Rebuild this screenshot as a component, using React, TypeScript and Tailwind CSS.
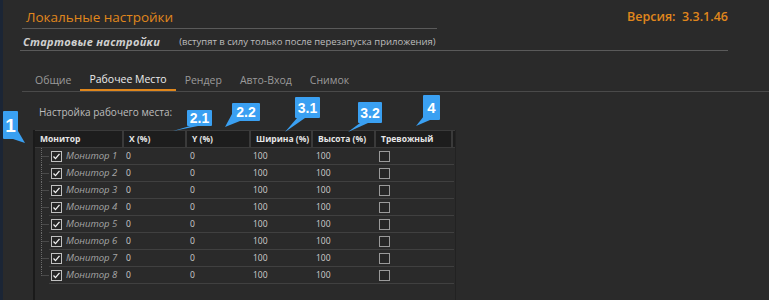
import React from "react";

const tabs = ["Общие", "Рабочее Место", "Рендер", "Авто-Вход", "Снимок"];
const monitors = [1, 2, 3, 4, 5, 6, 7, 8];

// callout shapes: box + tail, label sits on top
const callouts = [
  { label: "1", box: [3, 111, 15, 28], tail: "13,139 18,131 25,143", text: "text-[19px]" },
  { label: "2.1", box: [187, 110, 25, 16], tail: "190,126 198,126 173,131", text: "text-[14px]" },
  { label: "2.2", box: [232, 103, 28, 18], tail: "232,114 240,121 225,127", text: "text-[14px]" },
  { label: "3.1", box: [295, 97, 25, 21], tail: "297,118 305,118 285,132", text: "text-[14px]" },
  { label: "3.2", box: [358, 102, 24, 21], tail: "360,123 368,123 348,132", text: "text-[14px]" },
  { label: "4", box: [423, 95, 17, 25], tail: "424,116 430,120 416,126", text: "text-[15px]" },
];

const Check = ({ checked }: { checked: boolean }) => (
  <svg width="11" height="11" viewBox="0 0 11 11" className="shrink-0">
    <rect x="0.5" y="0.5" width="10" height="10" fill="#262626" stroke={checked ? "#c0c0c0" : "#9a9a9a"} />
    {checked && <path d="M2.5 5.5 L4.5 7.6 L8.5 2.8" fill="none" stroke="#f2f2f2" strokeWidth="1.3" />}
  </svg>
);

const Tree = ({ last }: { last: boolean }) => (
  <svg width="14" height="17" viewBox="0 0 14 17" className="shrink-0">
    <line x1="6.5" y1="0" x2="6.5" y2={last ? 8.5 : 17} stroke="#6a6a6a" strokeDasharray="1 1" />
    <line x1="6.5" y1="8.5" x2="14" y2="8.5" stroke="#6a6a6a" strokeDasharray="1 1" />
  </svg>
);

const head = "pl-[5px] flex items-center whitespace-nowrap border-r-2 border-[#3a3a3a]";

export default function App() {
  return (
    <div className="relative w-[769px] h-[300px] overflow-hidden bg-[#2a2a2a] border-l-[3px] border-[#1b2535] font-['Open_Sans',sans-serif]">
      {/* header */}
      <div className="flex items-start justify-between pr-[41px]">
        <div className="ml-[19px] w-[415px] h-[29px] border-b border-[#5a5a5a] pl-[4px] pt-[8px] text-[13.5px] leading-[18px] text-[#e0871c]">
          Локальные настройки
        </div>
        <div className="pt-[9px] text-[12.5px] leading-[16px] font-semibold text-[#e0871c] whitespace-pre">
          Версия:  3.3.1.46
        </div>
      </div>

      <div className="ml-[17px] w-[708px] h-[22px] border-b border-[#5a5a5a] flex items-end pb-[1px] pl-[3px]">
        <span className="text-[11px] leading-[14px] font-bold italic text-[#d0d0d0] tracking-[0.3px]">
          Стартовые настройки
        </span>
        <span className="ml-[19px] text-[9.5px] leading-[14px] text-[#bdbdbd]">
          (вступят в силу только после перезапуска приложения)
        </span>
      </div>

      {/* tabs */}
      <div className="ml-[19px] mt-[19px] pl-[4px] flex border-b border-[#4a4a4a]">
        {tabs.map((t, i) => (
          <div
            key={t}
            className={
              i === 1
                ? "px-[9px] h-[21px] flex items-center text-[10.5px] text-[#ececec] border-b-2 border-[#e0871c]"
                : "px-[9px] h-[21px] flex items-center text-[10.5px] text-[#9a9a9a]"
            }
          >
            {t}
          </div>
        ))}
      </div>

      <div className="ml-[36px] mt-[14px] text-[10px] leading-[13px] text-[#bdbdbd]">
        Настройка рабочего места:
      </div>

      {/* table */}
      <div className="ml-[30px] mt-[11px] w-[423px] h-[200px] border-l-2 border-r border-l-[#1a1a1a] border-r-[#222]">
        <div className="flex h-[18px] bg-[#1d1d1d] text-[8.5px] font-bold text-[#e6e6e6] border-y border-[#3a3a3a]">
          <div className={`w-[89px] ${head}`}>Монитор</div>
          <div className={`w-[63px] ${head}`}>X (%)</div>
          <div className={`w-[64px] ${head}`}>Y (%)</div>
          <div className={`w-[62px] ${head}`}>Ширина (%)</div>
          <div className={`w-[63px] ${head}`}>Высота (%)</div>
          <div className={`w-[77px] ${head}`}>Тревожный</div>
        </div>
        {monitors.map((m, i) => (
          <div key={m} className="flex h-[17px]">
            <Tree last={i === monitors.length - 1} />
            <div className="flex items-center w-[405px] border-b border-[#404040] text-[8.5px] text-[#cfcfcf]">
              <div className="w-[75px] flex items-center pl-[2px]">
                <Check checked />
                <span className="ml-[4px] text-[9.5px] italic text-[#a6a6a6] whitespace-nowrap">Монитор {m}</span>
              </div>
              <div className="w-[63px] pl-[2px]">0</div>
              <div className="w-[64px] pl-[3px]">0</div>
              <div className="w-[62px] pl-[2px]">100</div>
              <div className="w-[63px] pl-[3px]">100</div>
              <div className="pl-[3px] flex items-center">
                <Check checked={false} />
              </div>
            </div>
          </div>
        ))}
      </div>

      {/* callouts */}
      <svg className="absolute left-[-3px] top-0" width="769" height="300">
        {callouts.map((c) => (
          <g key={c.label} fill="#3aa0f2">
            <rect x={c.box[0]} y={c.box[1]} width={c.box[2]} height={c.box[3]} rx="1" />
            <polygon points={c.tail} />
          </g>
        ))}
      </svg>
      {callouts.map((c) => (
        <div
          key={c.label}
          className={`absolute flex items-center justify-center font-bold text-white leading-none font-['Liberation_Sans',sans-serif] ${c.text}`}
          style={{ left: c.box[0] - 3, top: c.box[1], width: c.box[2], height: c.box[3] }}
        >
          {c.label}
        </div>
      ))}
    </div>
  );
}
